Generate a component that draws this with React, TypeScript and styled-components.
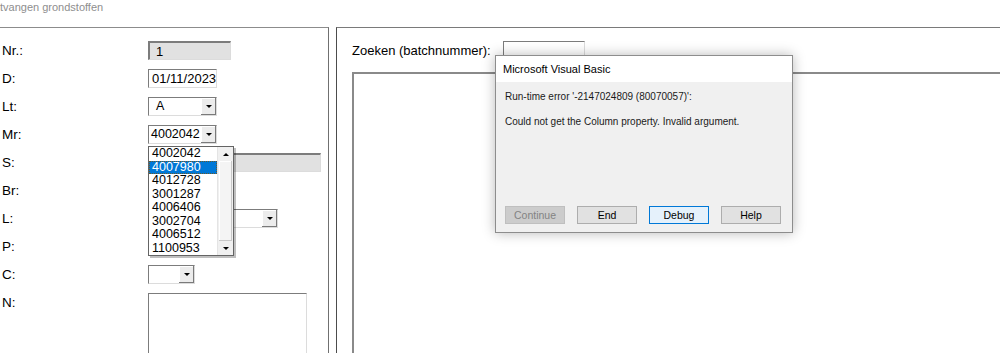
import React from "react";
import styled, { createGlobalStyle, css } from "styled-components";

const GlobalStyle = createGlobalStyle`
  html, body { margin: 0; padding: 0; background: #ffffff; overflow: hidden; }
  body { font-family: "Liberation Sans", Arial, sans-serif; color: #000; }
  * { box-sizing: border-box; }
`;

const Page = styled.div`
  position: relative;
  width: 1000px;
  height: 353px;
  overflow: hidden;
  display: flex;
  flex-direction: column;
`;

const Header = styled.div`
  height: 27px;
  flex-shrink: 0;
  font-size: 11px;
  line-height: 14px;
  color: #8e8e8e;
  white-space: nowrap;
`;

const Main = styled.div`
  display: flex;
  gap: 7px;
  height: 340px;
  flex-shrink: 0;
`;

const LeftFrame = styled.div`
  width: 329px;
  flex-shrink: 0;
  border-top: 1px solid #8c8c8c;
  border-right: 1px solid #707070;
  padding-top: 13px;
`;

const Form = styled.div`
  display: grid;
  grid-template-columns: 148px 1fr;
  grid-auto-rows: 28px;
`;

const Label = styled.div`
  padding-left: 2px;
  font-size: 13.5px;
  line-height: 19px;
  height: 19px;
`;

const Cell = styled.div`
  position: relative;
`;

const inset = css`
  border-style: solid;
  border-width: 1px;
  border-color: #7c7c7c #dcdcdc #dcdcdc #7c7c7c;
`;

const TextBox = styled.div<{ $w: number; $grey?: boolean; $pad?: number; $h?: number }>`
  ${inset};
  width: ${(p) => p.$w}px;
  height: ${(p) => p.$h ?? 19}px;
  background: ${(p) => (p.$grey ? "#e1e1e1" : "#ffffff")};
  border-top-width: ${(p) => (p.$grey ? 2 : 1)}px;
  border-left-width: ${(p) => (p.$grey ? 2 : 1)}px;
  padding-left: ${(p) => p.$pad ?? 3}px;
  font-size: 13px;
  line-height: 17px;
  white-space: nowrap;
`;

const Combo = styled.div<{ $w: number }>`
  ${inset};
  width: ${(p) => p.$w}px;
  height: 19px;
  background: #fff;
  display: flex;
`;

const ComboValue = styled.div<{ $pad: number }>`
  flex: 1;
  padding-left: ${(p) => p.$pad}px;
  font-size: 12.5px;
  line-height: 17px;
  white-space: nowrap;
  overflow: hidden;
`;

const DropButton = styled.div`
  width: 15px;
  height: 17px;
  background: #ececec;
  box-shadow: inset -1px -1px 0 #7a7a7a, inset 1px 1px 0 #ffffff;
  display: flex;
  align-items: center;
  justify-content: center;
`;

const Arrow = styled.span<{ $up?: boolean }>`
  width: 0;
  height: 0;
  border-left: 3px solid transparent;
  border-right: 3px solid transparent;
  ${(p) =>
    p.$up
      ? css`border-bottom: 3px solid #000;`
      : css`border-top: 3px solid #000;`}
`;

const DropList = styled.div`
  position: absolute;
  left: 0;
  top: 21px;
  width: 86px;
  height: 110px;
  background: #fff;
  border: 1px solid #646464;
  box-shadow: 2px 2px 0 rgba(0, 0, 0, 0.25);
  display: flex;
  z-index: 3;
`;

const Items = styled.div`
  flex: 1;
`;

const Item = styled.div<{ $sel?: boolean }>`
  height: 13.5px;
  line-height: 13.5px;
  font-size: 12.5px;
  padding-left: 3px;
  ${(p) =>
    p.$sel &&
    css`
      background: #0078d7;
      color: #fff;
      outline: 1px dotted #6b5a2a;
      outline-offset: -1px;
    `}
`;

const ScrollBar = styled.div`
  width: 16px;
  background: #f0f0f0;
  border-left: 1px solid #e4e4e4;
  display: flex;
  flex-direction: column;
`;

const ScrollArrow = styled.div`
  height: 14px;
  display: flex;
  align-items: center;
  justify-content: center;
  background: #f0f0f0;
`;

const ScrollThumb = styled.div`
  flex: 1;
  margin: 0 1px;
  background: #f4f4f4;
  box-shadow: inset -1px -1px 0 #c8c8c8, inset 1px 1px 0 #ffffff;
`;

const RightFrame = styled.div`
  flex: 1;
  border-top: 1px solid #7a7a7a;
  border-left: 1px solid #4c4c4c;
  padding: 13px 0 0 15px;
  display: flex;
  flex-direction: column;
  margin-right: -20px;
`;

const SearchRow = styled.div`
  display: flex;
  align-items: center;
  gap: 12px;
  height: 19px;
`;

const SearchLabel = styled.div`
  font-size: 13px;
  line-height: 19px;
  white-space: nowrap;
`;

const SearchInput = styled.div`
  ${inset};
  width: 82px;
  height: 19px;
  background: #fff;
`;

const ListBox = styled.div`
  margin-top: 12px;
  flex: 1;
  border-style: solid;
  border-width: 2px 1px 1px 2px;
  border-color: #8a8a8a #e0e0e0 #e0e0e0 #8a8a8a;
  background: #fff;
`;

const Dialog = styled.div`
  position: absolute;
  left: 495px;
  top: 55px;
  width: 298px;
  height: 178px;
  border: 1px solid #8d8d8d;
  background: #f0f0f0;
  box-shadow: 0 0 12px rgba(0, 0, 0, 0.28);
  display: flex;
  flex-direction: column;
  z-index: 5;
`;

const TitleBar = styled.div`
  height: 26px;
  background: #fff;
  padding-left: 7px;
  display: flex;
  align-items: center;
  font-size: 11px;
  color: #000;
`;

const DialogBody = styled.div`
  flex: 1;
  display: flex;
  flex-direction: column;
  padding: 8px 10px 8px 9px;
`;

const Message = styled.div<{ $gap: number }>`
  margin-top: ${(p) => p.$gap}px;
  font-size: 10px;
  line-height: 14px;
  color: #1a1a1a;
  white-space: nowrap;
`;

const ButtonRow = styled.div`
  margin-top: auto;
  display: flex;
  gap: 12px;
`;

const Button = styled.div<{ $disabled?: boolean; $focus?: boolean }>`
  width: 60px;
  height: 18px;
  font-size: 10.5px;
  line-height: 16px;
  text-align: center;
  border: 1px solid #adadad;
  background: #e1e1e1;
  color: #000;
  ${(p) =>
    p.$disabled &&
    css`
      background: #cccccc;
      border-color: #bfbfbf;
      color: #838383;
    `}
  ${(p) =>
    p.$focus &&
    css`
      border-color: #0078d7;
      background: #e5f1fb;
    `}
`;

const listItems = [
  "4002042",
  "4007980",
  "4012728",
  "3001287",
  "4006406",
  "3002704",
  "4006512",
  "1100953",
];

export default function App() {
  return (
    <>
      <GlobalStyle />
      <Page>
        <Header>tvangen grondstoffen</Header>
        <Main>
          <LeftFrame>
            <Form>
              <Label>Nr.:</Label>
              <Cell>
                <TextBox $w={83} $grey $pad={6}>1</TextBox>
              </Cell>

              <Label>D:</Label>
              <Cell>
                <TextBox $w={69}>01/11/2023</TextBox>
              </Cell>

              <Label>Lt:</Label>
              <Cell>
                <Combo $w={69}>
                  <ComboValue $pad={7}>A</ComboValue>
                  <DropButton><Arrow /></DropButton>
                </Combo>
              </Cell>

              <Label>Mr:</Label>
              <Cell>
                <Combo $w={69}>
                  <ComboValue $pad={2}>4002042</ComboValue>
                  <DropButton><Arrow /></DropButton>
                </Combo>
                <DropList>
                  <Items>
                    {listItems.map((it, i) => (
                      <Item key={it} $sel={i === 1}>{it}</Item>
                    ))}
                  </Items>
                  <ScrollBar>
                    <ScrollArrow><Arrow $up /></ScrollArrow>
                    <ScrollThumb />
                    <ScrollArrow><Arrow /></ScrollArrow>
                  </ScrollBar>
                </DropList>
              </Cell>

              <Label>S:</Label>
              <Cell>
                <TextBox $w={173} $grey />
              </Cell>

              <Label>Br:</Label>
              <Cell>
                <TextBox $w={70} />
              </Cell>

              <Label>L:</Label>
              <Cell>
                <Combo $w={130}>
                  <ComboValue $pad={3} />
                  <DropButton><Arrow /></DropButton>
                </Combo>
              </Cell>

              <Label>P:</Label>
              <Cell>
                <Combo $w={84}>
                  <ComboValue $pad={3} />
                  <DropButton><Arrow /></DropButton>
                </Combo>
              </Cell>

              <Label>C:</Label>
              <Cell>
                <Combo $w={47}>
                  <ComboValue $pad={3} />
                  <DropButton><Arrow /></DropButton>
                </Combo>
              </Cell>

              <Label>N:</Label>
              <Cell>
                <TextBox $w={159} $h={80} />
              </Cell>
            </Form>
          </LeftFrame>

          <RightFrame>
            <SearchRow>
              <SearchLabel>Zoeken (batchnummer):</SearchLabel>
              <SearchInput />
            </SearchRow>
            <ListBox />
          </RightFrame>
        </Main>

        <Dialog>
          <TitleBar>Microsoft Visual Basic</TitleBar>
          <DialogBody>
            <Message $gap={0}>Run-time error '-2147024809 (80070057)':</Message>
            <Message $gap={11}>Could not get the Column property. Invalid argument.</Message>
            <ButtonRow>
              <Button $disabled>Continue</Button>
              <Button>End</Button>
              <Button $focus>Debug</Button>
              <Button>Help</Button>
            </ButtonRow>
          </DialogBody>
        </Dialog>
      </Page>
    </>
  );
}
